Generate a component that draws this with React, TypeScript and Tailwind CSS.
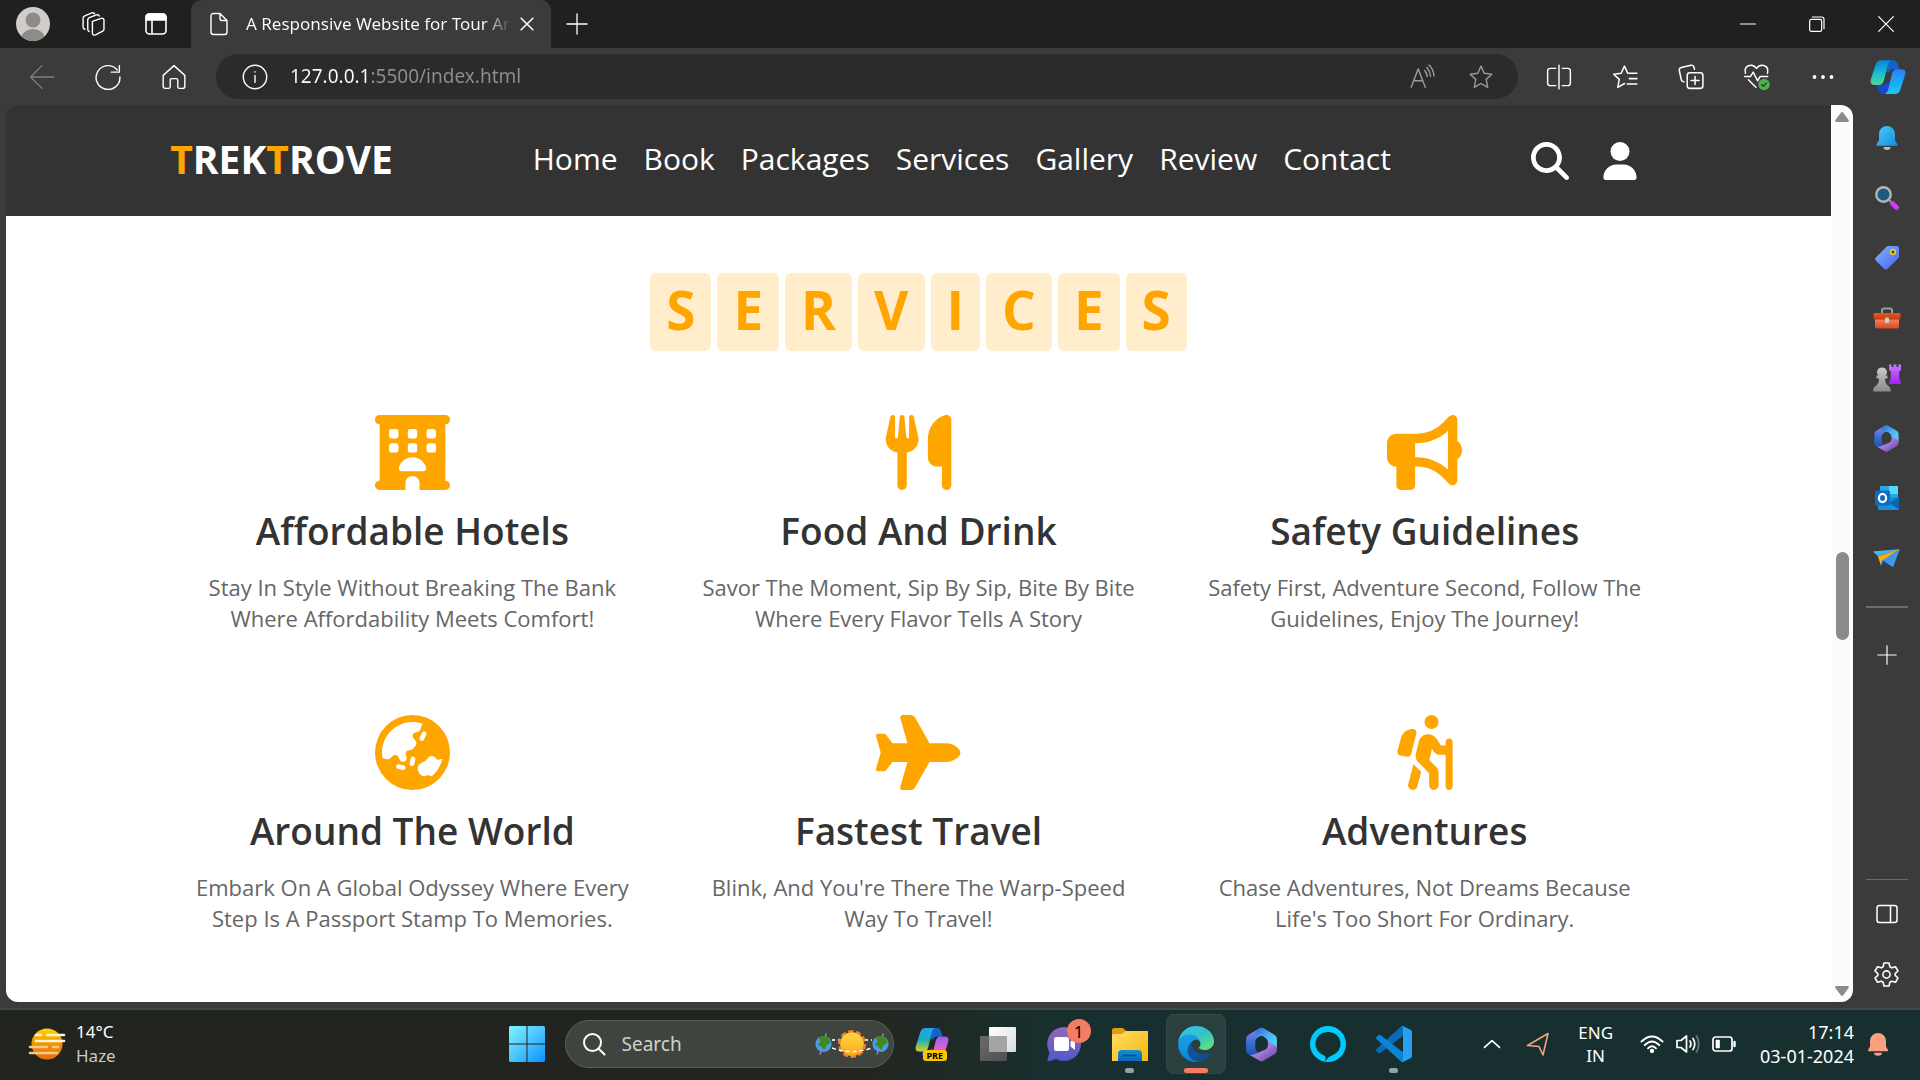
import type { ComponentType, ReactNode } from 'react';
import {
  FaBullhorn,
  FaEarthAsia,
  FaHotel,
  FaMagnifyingGlass,
  FaPersonHiking,
  FaUser,
  FaUtensils,
} from 'react-icons/fa6';

/* ---------- shared pieces ---------- */

function Gradient({ id, stops, vertical }: { id: string; stops: string[]; vertical?: boolean }) {
  return (
    <linearGradient id={id} x1="0" y1="0" x2={vertical ? '0' : '1'} y2="1">
      {stops.map((color, i) => (
        <stop key={color + i} offset={i / (stops.length - 1)} stopColor={color} />
      ))}
    </linearGradient>
  );
}

function GradientDefs() {
  return (
    <svg className="absolute size-0" aria-hidden="true">
      <defs>
        <Gradient id="bell" stops={['#4fc8f7', '#0f8fe0']} />
        <Gradient id="tag" stops={['#7ab8ff', '#4f5cf0']} />
        <Gradient id="rook" stops={['#c77dff', '#a41df5']} vertical />
        <Gradient id="pawn" stops={['#c9c9c9', '#8a8a8a']} vertical />
        <Gradient id="boxTop" stops={['#e8581c', '#c03a10']} vertical />
        <Gradient id="boxBody" stops={['#f58a60', '#dc4a20']} vertical />
        <Gradient id="mLeft" stops={['#a77be8', '#3d6fd6', '#1a52b8']} vertical />
        <Gradient id="mTop" stops={['#2f66d0', '#4fb0f5', '#4fe0f0']} />
        <Gradient id="mBottom" stops={['#c99af5', '#a878d8', '#5c3a94']} />
        <Gradient id="planeTop" stops={['#5cc8f5', '#2a90e8']} />
        <Gradient id="planeBody" stops={['#2f86e8', '#4aa8f5']} />
        <Gradient id="coA" stops={['#0a84d8', '#16b8d8', '#50d890']} vertical />
        <Gradient id="coB" stops={['#2f7cf0', '#18a8f8', '#22c8e8']} vertical />
        <Gradient id="cpA" stops={['#2aa0f0', '#16b0c0', '#d8d020']} vertical />
        <Gradient id="cpB" stops={['#9060f8', '#e060d0', '#ff7a60']} vertical />
        <Gradient id="sun" stops={['#ffd400', '#f29400', '#e86c10']} vertical />
        <Gradient id="sunCore" stops={['#ffd840', '#f8a818']} vertical />
        <Gradient id="start" stops={['#80f4ff', '#4cc4ff', '#0a90ff']} />
        <Gradient id="taskFront" stops={['#ffffff', '#dcdcdc']} />
        <Gradient id="taskBack" stops={['#6a6a6a', '#505050']} />
        <Gradient id="chat" stops={['#9468b8', '#5058c8']} vertical />
        <Gradient id="folder" stops={['#ffdc68', '#f8b808']} />
        <Gradient id="folderBase" stops={['#1290d8', '#0868b8']} vertical />
        <Gradient id="edgeDark" stops={['#0c59a4', '#114a8b']} />
        <Gradient id="edgeBlue" stops={['#1b9de2', '#1595df', '#0680d7']} vertical />
        <Gradient id="edgeGreen" stops={['#35c1f1', '#34c1c8', '#66eb6e']} />
      </defs>
    </svg>
  );
}

function Line({ size = 'size-6', width = 1.3, children }: { size?: string; width?: number; children: ReactNode }) {
  return (
    <svg
      viewBox="0 0 24 24"
      className={`${size} shrink-0`}
      fill="none"
      stroke="currentColor"
      strokeWidth={width}
      strokeLinecap="round"
      strokeLinejoin="round"
      aria-hidden="true"
    >
      {children}
    </svg>
  );
}

function IconButton({ label, className, children }: { label: string; className: string; children: ReactNode }) {
  return (
    <button type="button" aria-label={label} className={`flex shrink-0 items-center justify-center ${className}`}>
      {children}
    </button>
  );
}

/* ---------- coloured logos ---------- */

function Microsoft365({ size }: { size: string }) {
  return (
    <svg viewBox="0 0 24 24" className={size} aria-hidden="true">
      <path d="M11 1.300 3.600 5.600Q2 6.500 2 8.300V15.800Q2 17.500 3.500 18.300L6 19.300 9.500 17.200Q8 16.200 8 14V10Q8 8.200 9.500 7.200L13 5Z" fill="url(#mLeft)" />
      <path d="M9.500 2.200 11 1.300Q12 .7 13 1.300L20.400 5.600Q22 6.500 22 8.300V14.500L16.200 11Q16.200 8.600 14.500 7.600L13 6.700Q10.800 5.700 8 8.800V4.500Q8 2.900 9.500 2.200Z" fill="url(#mTop)" />
      <path d="M22 13.500V15.800Q22 17.500 20.400 18.400L13 22.700Q12 23.300 11 22.700L3.600 18.400Q5.800 19.300 7.600 18.200L14.500 15.300Q16.200 14.400 16.200 12.500V10Z" fill="url(#mBottom)" />
    </svg>
  );
}

function CopilotMark({ size, first, second }: { size: string; first: string; second: string }) {
  return (
    <svg viewBox="0 0 32 32" className={size} aria-hidden="true">
      <path d="M14 1H20.500Q23.500 1 24.500 4L26 9H20.500Q18 9 17 12L14.500 11Z" fill="#1464c8" />
      <path d="M18 31H11.500Q8.500 31 7.500 28L6 23H11.500Q14 23 15 20L17.500 21Z" fill="#1748d0" />
      <path d="M10 1H18.500Q16.600 2 15.800 5L12.600 18.500Q11.500 23 8.500 23H4Q-.5 23 .8 18L5 5Q6.200 1 10 1Z" fill={first} />
      <path d="M22 31H13.500Q15.400 30 16.200 27L19.400 13.500Q20.500 9 23.500 9H28Q32.500 9 31.200 14L27 27Q25.800 31 22 31Z" fill={second} />
    </svg>
  );
}

function EdgeLogo() {
  return (
    <svg viewBox="0 0 256 256" className="size-9" aria-hidden="true">
      <path fill="url(#edgeDark)" d="M231 190.500c-3.400 1.800-6.900 3.300-10.500 4.700a101.100 101.100 0 0 1-35.600 6.500c-46.900 0-87.700-32.300-87.700-73.600a31.400 31.400 0 0 1 16.400-27.400c-42.400 1.800-53.300 46-53.300 71.900 0 73.200 67.500 80.600 82 80.600 7.800 0 19.600-2.300 26.700-4.500l1.300-.4a128.400 128.400 0 0 0 66.600-52.900 4 4 0 0 0-5.600-5.500z" />
      <path fill="url(#edgeBlue)" d="M105.700 241.400a79.200 79.200 0 0 1-22.700-21.300 80.700 80.700 0 0 1 30.300-119.400c3.200-1.500 8.500-4.100 15.600-4a32.400 32.400 0 0 1 25.700 13 31.900 31.900 0 0 1 6.300 18.700c0-.2 24.500-79.600-80-79.600-43.900 0-80 41.700-80 78.300-.2 19.400 4 38.600 12.100 56.100a128 128 0 0 0 156.400 67 75.500 75.500 0 0 1-63.800-8.800z" />
      <path fill="url(#edgeGreen)" d="M152.300 148.900c-.8 1-3.300 2.500-3.300 5.700 0 2.600 1.700 5.100 4.700 7.300 14.400 10 41.500 8.700 41.500 8.700a59.600 59.600 0 0 0 30.300-8.400A61.400 61.400 0 0 0 256 109.300c.3-22.400-8-37.300-11.300-43.900C223.500 23.900 177.700 0 128 0A128 128 0 0 0 0 126.200c.5-36.500 36.800-66 80-66 3.500 0 23.500.3 42 10 16.300 8.600 24.900 18.900 30.800 29.200 6.200 10.700 7.300 24.100 7.300 29.500s-2.700 13.300-7.800 20z" />
    </svg>
  );
}

function CodeLogo() {
  return (
    <svg viewBox="0 0 100 100" className="size-9" aria-hidden="true">
      <path fill="#0a6cb8" d="M96.460 10.800 75.870.88a6.230 6.230 0 0 0-7.100 1.200L1.350 63.600a4.170 4.170 0 0 0 0 6.170l5.500 5a4.170 4.170 0 0 0 5.330.24L93.350 13.400A4.140 4.140 0 0 1 100 16.700v-.24a6.250 6.250 0 0 0-3.540-5.630z" />
      <path fill="#0a84d8" d="m96.460 89.200-20.590 9.910a6.220 6.220 0 0 1-7.100-1.210L1.350 36.400a4.170 4.170 0 0 1 0-6.170l5.500-5a4.170 4.170 0 0 1 5.330-.24l81.170 61.600a4.140 4.140 0 0 0 6.650-3.300v.24a6.250 6.250 0 0 1-3.540 5.640z" />
      <path fill="#27a0f2" d="M75.870 99.120a6.230 6.230 0 0 1-7.100-1.210A3.660 3.660 0 0 0 75 95.320V4.680a3.660 3.660 0 0 0-6.230-2.590 6.230 6.230 0 0 1 7.100-1.210l20.590 9.900A6.250 6.250 0 0 1 100 16.400v67.200a6.250 6.250 0 0 1-3.540 5.630z" />
    </svg>
  );
}

function Bell() {
  return (
    <svg viewBox="0 0 24 24" className="size-6" aria-hidden="true">
      <path d="M8.500 21h7a3.500 3 0 0 1-7 0Z" fill="#b9b9c4" />
      <path d="M12 0a8 8 0 0 0-8 8v6L1.600 18.600Q1.200 19.800 2.400 19.800H21.600Q22.800 19.800 22.400 18.600L20 14V8A8 8 0 0 0 12 0Z" fill="url(#bell)" />
    </svg>
  );
}

function Loupe() {
  return (
    <svg viewBox="0 0 24 24" className="size-6" aria-hidden="true">
      <circle cx="8.500" cy="8.500" r="7.200" fill="#1c5a80" stroke="#b4b4b4" strokeWidth="2.400" />
      <path d="m14 14 2.500 2.500" stroke="#9a9a9a" strokeWidth="2" />
      <path d="m17.500 17.500 4 4" stroke="#d03cfa" strokeWidth="4.600" strokeLinecap="round" />
    </svg>
  );
}

function Tag() {
  return (
    <svg viewBox="0 0 24 24" className="size-6" aria-hidden="true">
      <path d="M13.500 0H21.500Q24 0 24 2.500V10Q24 11.500 23 12.500L12.500 23Q11 24.500 9.300 23L1 14.700Q-.6 13 1 11.300L11.500 .8Q12.300 0 13.500 0Z" fill="url(#tag)" />
      <circle cx="18" cy="6" r="2.300" fill="#40404a" stroke="#f2d000" strokeWidth="1.700" />
    </svg>
  );
}

function Toolbox() {
  return (
    <svg viewBox="0 0 28 22" className="h-[22px] w-7" aria-hidden="true">
      <path d="M9 6V3.500Q9 1.500 11 1.500H17Q19 1.500 19 3.500V6" fill="none" stroke="#9c9c9c" strokeWidth="2" />
      <path d="M2 11H26V19.500Q26 21.500 24 21.500H4Q2 21.500 2 19.500Z" fill="url(#boxBody)" />
      <rect x=".5" y="6" width="27" height="6.500" rx="1" fill="url(#boxTop)" />
      <rect x="12" y="10.500" width="4" height="5.500" rx=".8" fill="#cfcfcf" />
    </svg>
  );
}

function Games() {
  return (
    <svg viewBox="0 0 28 28" className="size-7" aria-hidden="true">
      <path d="M16 .5h2.500V3h2V.5h3V3h2V.5H28V6l-2 2 .6 8 1.400 2.500V20H16v-1.500L17.400 16 18 8l-2-2Z" fill="url(#rook)" />
      <path d="M9 3.500a4.600 4.600 0 0 0-3.500 8H3.500v3H6Q6 20 2.500 22 0 23.500 .3 27.500H17.700Q18 23.500 15.500 22 12 20 12 14.500h2.500v-3H12.500A4.600 4.600 0 0 0 9 3.500Z" fill="url(#pawn)" />
    </svg>
  );
}

function Outlook() {
  return (
    <svg viewBox="0 0 24 24" className="size-6" aria-hidden="true">
      <rect x="5" y="0" width="18" height="16" rx="1" fill="#28a8ea" />
      <rect x="14" y="0" width="9" height="8" fill="#50d9ff" />
      <path d="M3 12 24 11V22.500Q24 24 22.500 24H4.500Q3 24 3 22.500Z" fill="#1490df" />
      <path d="m14 17 10-6v12.500Z" fill="#0a64b4" />
      <rect x="0" y="4.500" width="15" height="15" rx="1.500" fill="#0f6cc0" />
      <ellipse cx="7.500" cy="12" rx="3.600" ry="4.100" fill="none" stroke="#fff" strokeWidth="2.200" />
    </svg>
  );
}

function PaperPlane() {
  return (
    <svg viewBox="0 0 28 20" className="h-5 w-7" aria-hidden="true">
      <path d="M0 3.500 27 1 5 8.500Z" fill="url(#planeTop)" />
      <path d="M27 1 20 19 9 12.500Z" fill="url(#planeBody)" />
      <path d="M5 8.500 27 1 9.500 12.500 8 18Z" fill="#f5b010" />
      <path d="m9.500 12.500 3.500 1.800L8 18Z" fill="#1c4fa8" />
    </svg>
  );
}

function Earth() {
  return (
    <svg viewBox="0 0 24 34" className="h-6 w-[17px]" aria-hidden="true">
      <path d="M16 2 7 32" stroke="#9a86d0" strokeWidth="2" />
      <circle cx="12" cy="17" r="11.500" fill="#4c9ae0" />
      <path d="M5 8Q12 3 20 9L22 15 16 19 13 26 9 21 4 18 8 13Z" fill="#3f8a1c" />
    </svg>
  );
}

function SearchHighlight() {
  return (
    <div className="flex items-center" aria-hidden="true">
      <Earth />
      <svg viewBox="0 0 40 32" className="h-8 w-10">
        <path d="M0 12H7M33 12H40" stroke="#d8d8e8" strokeWidth="2" strokeDasharray="3 3" />
        <circle cx="20" cy="16" r="12" fill="#f08030" stroke="#f08030" strokeWidth="4" strokeDasharray="5 2.500" />
        <circle cx="20" cy="16" r="11.500" fill="url(#sunCore)" />
        <path d="M0 20Q20 27 40 20" stroke="#fff" strokeWidth="1.600" strokeDasharray="4 3" fill="none" />
      </svg>
      <Earth />
    </div>
  );
}

/* ---------- browser frame ---------- */

function TitleBar() {
  return (
    <div className="flex h-12 items-stretch bg-[#202020] pl-0.5 text-white">
      <IconButton label="Profile" className="w-[62px]">
        <svg viewBox="0 0 34 34" className="size-[34px]" aria-hidden="true">
          <clipPath id="avatarClip">
            <circle cx="17" cy="17" r="17" />
          </clipPath>
          <g clipPath="url(#avatarClip)">
            <rect width="34" height="34" fill="#d0cecb" />
            <circle cx="17" cy="13" r="7.500" fill="#8f8b87" />
            <ellipse cx="17" cy="32" rx="12" ry="10" fill="#8f8b87" />
          </g>
        </svg>
      </IconButton>
      <IconButton label="Workspaces" className="w-[58px]">
        <Line size="size-7" width={1.2}>
          <path d="M11.500 9.800 19 7.200Q20.800 6.600 21.400 8.400V16.500Q21.400 17.700 20.300 18.200L14.200 21.300Q11.900 22.200 11.500 20Z" />
          <path d="M8.800 18.500Q7.500 18 7.500 16.500V8.500Q7.500 7.200 8.800 6.600L15 4.200Q16.800 3.600 17.400 5.200" />
          <path d="M5 16.500Q3.500 16 3.500 14.500V7Q3.500 5.500 4.900 5L11 2.500Q12.800 2 13.400 3.300" />
        </Line>
      </IconButton>
      <IconButton label="Tab actions" className="w-[68px]">
        <svg viewBox="0 0 24 24" className="size-6" fill="none" stroke="currentColor" strokeWidth="1.600" aria-hidden="true">
          <rect x="2" y="2" width="20" height="20" rx="3.500" />
          <path d="M2 8V5.500Q2 2 5.500 2h13Q22 2 22 5.500V8Z" fill="currentColor" />
          <path d="M8 8v14" />
        </svg>
      </IconButton>
      <div className="ml-px flex w-[360px] items-center rounded-t-[10px] bg-[#3b3b3b] pr-3 pl-4">
        <Line size="size-6" width={1.400}>
          <path d="M6.500 1.500H13L20 8.500V20Q20 22.500 17.500 22.500H6.500Q4 22.500 4 20V4Q4 1.500 6.500 1.500ZM13 1.500V6.500Q13 8.500 15 8.500H20" />
        </Line>
        <span className="ml-[15px] min-w-0 flex-1 overflow-hidden bg-linear-to-r from-white from-90% to-transparent bg-clip-text text-[17px] whitespace-nowrap text-transparent">
          A Responsive Website for Tour And
        </span>
        <IconButton label="Close tab" className="ml-1 size-6">
          <Line size="size-5" width={1.800}>
            <path d="m5 5 14 14M19 5 5 19" />
          </Line>
        </IconButton>
      </div>
      <IconButton label="New tab" className="w-[52px]">
        <Line size="size-6" width={1.300}>
          <path d="M12 2v20M2 12h20" />
        </Line>
      </IconButton>
      <div className="flex-1" />
      <IconButton label="Minimise" className="w-[69px]">
        <Line size="size-4" width={1.800}>
          <path d="M1 12h22" />
        </Line>
      </IconButton>
      <IconButton label="Restore" className="w-[69px]">
        <Line size="size-4" width={1.800}>
          <rect x="1" y="5" width="18" height="18" rx="2.500" />
          <path d="M5 1.500H19Q22.500 1.500 22.500 5V19" />
        </Line>
      </IconButton>
      <IconButton label="Close window" className="w-[69px]">
        <Line size="size-4" width={1.800}>
          <path d="m1 1 22 22M23 1 1 23" />
        </Line>
      </IconButton>
    </div>
  );
}

const star = 'm12 2 3 6.500 7 .9-5.200 4.800L18.200 21.500 12 18 5.800 21.500l1.400-7.300L2 9.400l7-.9Z';

function AddressBar() {
  return (
    <div className="flex h-[57px] items-center bg-[#3b3b3b] pl-[9px] text-white">
      <IconButton label="Back" className="h-11 w-[66px] text-[#808080]">
        <Line size="size-[26px]" width={1.200}>
          <path d="M23 12H1.500M12 1.500 1.500 12 12 22.500" />
        </Line>
      </IconButton>
      <IconButton label="Refresh" className="h-11 w-[66px]">
        <Line size="size-[26px]">
          <path d="M20.500 5.500A11 11 0 1 0 23 12M22.500 1.500V7.500H15" />
        </Line>
      </IconButton>
      <IconButton label="Home" className="h-11 w-[66px]">
        <Line size="size-[26px]">
          <path d="M2 10.500 12 1.500l10 9V20.500Q22 22.500 20 22.500H17Q15.500 22.500 15.500 21V15Q15.500 13.500 14 13.500H10Q8.500 13.500 8.500 15V21Q8.500 22.500 7 22.500H4Q2 22.500 2 20.500Z" />
        </Line>
      </IconButton>
      <div className="ml-[9px] flex h-[45px] min-w-0 flex-1 items-center rounded-full bg-[#2b2b2b] pr-2 pl-[26px]">
        <IconButton label="Site information" className="size-[26px]">
          <Line size="size-[26px]">
            <circle cx="12" cy="12" r="10.800" />
            <path d="M12 10.500v6.500M12 7v.4" />
          </Line>
        </IconButton>
        <input
          aria-label="Address"
          defaultValue="127.0.0.1:5500/index.html"
          className="ml-[22px] min-w-0 flex-1 bg-linear-to-r from-white from-[81px] to-[#8e8e8e] to-[81px] bg-clip-text text-[19px] text-transparent outline-none"
        />
        <IconButton label="Read aloud" className="w-[59px] text-[#9a9a9a]">
          <Line size="size-[26px]" width={1.300}>
            <path d="m2 21.500 6.500-17 6.500 17M4.500 15.500h8M14.500 6q2 2.200 2.300 5.500M16.500 3.300q3 3.300 3.400 8M18.500 1q4.300 4.300 4.500 10" />
          </Line>
        </IconButton>
        <IconButton label="Add to favourites" className="w-[59px] text-[#9a9a9a]">
          <Line size="size-[26px]">
            <path d={star} />
          </Line>
        </IconButton>
      </div>
      <IconButton label="Split screen" className="ml-2 h-11 w-[66px]">
        <Line size="size-[26px]">
          <path d="M9 4H4Q1.500 4 1.500 6.500V17.500Q1.500 20 4 20H9M15 4h5Q22.500 4 22.500 6.500V17.500Q22.500 20 20 20H15M12 1v22" />
        </Line>
      </IconButton>
      <IconButton label="Favourites" className="h-11 w-[66px]">
        <Line size="size-[26px]" width={1.400}>
          <path d="M14.500 8.500 11.500 2 8.500 8.500 1.500 9.400l5.200 4.800L5.300 21.500 11.500 18M14.500 8.500H23M16 13.500H23M14 18.500H23" />
        </Line>
      </IconButton>
      <IconButton label="Collections" className="h-11 w-[66px]">
        <Line size="size-[26px]" width={1.400}>
          <rect x="8.500" y="8" width="14.500" height="14.500" rx="2.500" />
          <path d="M15.750 11.500v7.500M12 15.250h7.500M5.500 16.500 4.300 16Q3.300 15.500 3 14.300L1.200 6Q.8 3.800 3 3.300L12 1.200Q14.300 .8 14.800 3L15.200 4.800" />
        </Line>
      </IconButton>
      <IconButton label="Browser essentials" className="h-11 w-[66px]">
        <svg viewBox="0 0 26 26" className="size-7" fill="none" stroke="currentColor" strokeWidth="1.400" strokeLinecap="round" strokeLinejoin="round" aria-hidden="true">
          <path d="M2.300 9.500Q1 4 5 2.500 9.500 1 12.500 5 15.500 1 20 2.500 24 4 22.700 9.500M1.500 12.500H7L9.500 8.500l4 8 2.500-4h7M5 15.500 12 22.500" />
          <circle cx="19.500" cy="20" r="5.300" fill="#4caf50" stroke="none" />
          <path d="m17.300 20 1.600 1.600 2.800-3" stroke="#1f3a20" strokeWidth="1.100" />
        </svg>
      </IconButton>
      <IconButton label="Settings and more" className="h-11 w-[66px]">
        <svg viewBox="0 0 24 24" className="size-6" fill="currentColor" aria-hidden="true">
          <circle cx="3.500" cy="12" r="1.900" />
          <circle cx="12" cy="12" r="1.900" />
          <circle cx="20.500" cy="12" r="1.900" />
        </svg>
      </IconButton>
      <IconButton label="Copilot" className="h-11 w-16">
        <CopilotMark size="size-9" first="url(#coA)" second="url(#coB)" />
      </IconButton>
    </div>
  );
}

const sidebarApps: [string, ReactNode][] = [
  ['Notifications', <Bell />],
  ['Search', <Loupe />],
  ['Shopping', <Tag />],
  ['Tools', <Toolbox />],
  ['Games', <Games />],
  ['Microsoft 365', <Microsoft365 size="size-[29px]" />],
  ['Outlook', <Outlook />],
  ['Drop', <PaperPlane />],
];

function SideBar() {
  return (
    <aside className="flex w-[67px] flex-col items-center pt-[3px] pb-1 text-white">
      {sidebarApps.map(([label, icon]) => (
        <IconButton key={label} label={label} className="h-15 w-15">
          {icon}
        </IconButton>
      ))}
      <hr className="mt-[18px] h-0.5 w-[42px] border-0 bg-[#6c6c6c]" />
      <IconButton label="Customise" className="mt-[17px] h-15 w-15">
        <Line size="size-5" width={1.400}>
          <path d="M12 1v22M1 12h22" />
        </Line>
      </IconButton>
      <div className="flex-1" />
      <hr className="h-px w-[42px] border-0 bg-[#6c6c6c]" />
      <IconButton label="Hide sidebar" className="mt-1 h-15 w-15">
        <Line size="size-6" width={1.500}>
          <rect x="2" y="3.500" width="20" height="17" rx="2.500" />
          <path d="M15.500 3.500v17" />
        </Line>
      </IconButton>
      <IconButton label="Sidebar settings" className="h-15 w-15">
        <Line size="size-[27px]" width={1.400}>
          <circle cx="12" cy="12" r="3.200" />
          <path d="M9.800 1.800h4.400l.8 3.300 1.700 1 3.300-1 2.200 3.800-2.500 2.300v1.600l2.500 2.300-2.200 3.800-3.300-1-1.700 1-.8 3.300H9.800L9 18.900l-1.700-1-3.300 1-2.200-3.800 2.500-2.300v-1.600L1.800 8.900 4 5.100l3.300 1 1.700-1Z" />
        </Line>
      </IconButton>
    </aside>
  );
}

function ScrollArrow({ className }: { className: string }) {
  return (
    <svg viewBox="0 0 14 10" className={`h-2.5 w-3.5 fill-[#8b8b8b] ${className}`}>
      <path d="M5.800 .8Q7-.6 8.200 .8L13.600 8Q14.400 10 12.600 10H1.400Q-.4 10 .4 8Z" />
    </svg>
  );
}

function ScrollBar() {
  return (
    <div className="flex w-[22px] flex-col items-center bg-[#fcfcfc] pt-[7px] pb-1.5" aria-hidden="true">
      <ScrollArrow className="" />
      <div className="grow-430" />
      <div className="h-[88px] w-[13px] rounded-full bg-[#8b8b8b]" />
      <div className="grow-346" />
      <ScrollArrow className="rotate-180" />
    </div>
  );
}

/* ---------- web page ---------- */

const links = ['Home', 'Book', 'Packages', 'Services', 'Gallery', 'Review', 'Contact'];

type IconProps = { className?: string };

function Airplane({ className }: IconProps) {
  return (
    <svg viewBox="0 0 576 512" className={className} fill="currentColor" aria-hidden="true">
      <path d="M482.300 192c34.200 0 93.700 29 93.700 64 0 36-59.500 64-93.700 64H365.700L265.200 495.900c-5.700 10-16.300 16.100-27.800 16.100h-56.200c-10.600 0-18.300-10.200-15.400-20.400l49-171.600H112l-43.200 57.600c-3 4-7.800 6.400-12.800 6.400H14c-7.800 0-14-6.300-14-14 0-1.300.2-2.600.5-3.900L32 256 .5 145.900c-.4-1.300-.5-2.600-.5-3.900 0-7.800 6.300-14 14-14h42c5 0 9.800 2.400 12.800 6.400L112 192h102.900l-49-171.600C162.900 10.200 170.600 0 181.200 0h56.200c11.500 0 22.100 6.200 27.800 16.100L365.700 192z" />
    </svg>
  );
}

const services: { icon: ComponentType<IconProps>; title: string; text: string }[] = [
  { icon: FaHotel, title: 'Affordable Hotels', text: 'Stay In Style Without Breaking The Bank Where Affordability Meets Comfort!' },
  { icon: FaUtensils, title: 'Food And Drink', text: 'Savor The Moment, Sip By Sip, Bite By Bite Where Every Flavor Tells A Story' },
  { icon: FaBullhorn, title: 'Safety Guidelines', text: 'Safety First, Adventure Second, Follow The Guidelines, Enjoy The Journey!' },
  { icon: FaEarthAsia, title: 'Around The World', text: 'Embark On A Global Odyssey Where Every Step Is A Passport Stamp To Memories.' },
  { icon: Airplane, title: 'Fastest Travel', text: "Blink, And You're There The Warp-Speed Way To Travel!" },
  { icon: FaPersonHiking, title: 'Adventures', text: "Chase Adventures, Not Dreams Because Life's Too Short For Ordinary." },
];

function WebPage() {
  return (
    <div className="flex min-w-0 flex-1 flex-col font-['Open_Sans',sans-serif]">
      <header className="flex items-center justify-between bg-[#333] px-[9%] py-9 text-white">
        <a href="#home" className="pb-[3px] text-[39px] leading-9 font-bold">
          <span className="text-[#ffa500]">T</span>REK<span className="text-[#ffa500]">T</span>ROVE
        </a>
        <nav className="flex gap-[26px] pb-[3px] text-[30px] leading-9">
          {links.map((link) => (
            <a key={link} href={`#${link.toLowerCase()}`}>
              {link}
            </a>
          ))}
        </nav>
        <div className="flex items-center gap-8 pr-7">
          <button type="button" aria-label="Search the site">
            <FaMagnifyingGlass className="size-[38px]" />
          </button>
          <button type="button" aria-label="Log in">
            <FaUser className="h-[38px] w-auto" />
          </button>
        </div>
      </header>
      <main className="flex-1 bg-white px-[9%] pt-[57px]">
        <h1 className="flex justify-center gap-1.5 text-[53px] leading-[62px] font-bold text-[#ffa500]" aria-label="Services">
          {'SERVICES'.split('').map((letter, i) => (
            <span key={i} className="rounded-md bg-[#ffedcc] px-4 pt-1.5 pb-2.5">
              {letter}
            </span>
          ))}
        </h1>
        <div className="mt-16 grid grid-cols-3 gap-x-[22px] gap-y-[81px]">
          {services.map(({ icon: Icon, title, text }) => (
            <section key={title} className="flex flex-col items-center px-[18px] text-center">
              <Icon className="h-[75px] w-auto text-[#ffa500]" />
              <h2 className="mt-[18px] text-[37px] leading-[46px] font-semibold text-[#333]">{title}</h2>
              <p className="mt-[18px] text-[22px] leading-[31px] text-[#666]">{text}</p>
            </section>
          ))}
        </div>
      </main>
    </div>
  );
}

/* ---------- taskbar ---------- */

function TaskButton({ label, running, active, children }: { label: string; running?: boolean; active?: boolean; children: ReactNode }) {
  return (
    <button type="button" aria-label={label} className="relative flex h-[66px] w-[66px] items-center justify-center">
      {active && <span className="absolute inset-[3px] rounded-lg border border-white/5 bg-white/8" />}
      <span className="relative">{children}</span>
      {running && <span className="absolute bottom-1 h-[5px] w-[9px] rounded-full bg-[#9aa3a3]" />}
      {active && <span className="absolute bottom-1 h-[5px] w-6 rounded-full bg-[#f47c64]" />}
    </button>
  );
}

function TaskBar() {
  return (
    <footer className="grid h-[72px] grid-cols-[1fr_auto_1fr] items-center border-t-2 border-[#3f4846] bg-linear-to-r from-[#22251f] from-45% to-[#17302f] to-55% pb-0.5 text-white">
      <button type="button" className="flex items-center gap-2.5 pl-[28px] text-left text-[17px] leading-6">
        <svg viewBox="0 0 38 38" className="size-[38px]" aria-hidden="true">
          <circle cx="19" cy="19" r="15.500" fill="url(#sun)" />
          <path d="M8 10h5M19 10h17M8 16h28" stroke="#fff4d8" strokeWidth="2.600" strokeLinecap="round" />
          <path d="M2 22h17M25 22h5M2 28h27" stroke="#f0c890" strokeWidth="2.600" strokeLinecap="round" />
        </svg>
        <span>
          14°C
          <br />
          <span className="text-[#c8cac6]">Haze</span>
        </span>
      </button>
      <div className="flex items-center">
        <TaskButton label="Start">
          <svg viewBox="0 0 35 35" className="size-9" aria-hidden="true">
            <path d="M1 0H17V17H0V1ZM18 0H34L35 1V17H18ZM0 18H17V35H1L0 34ZM18 18H35V34L34 35H18Z" fill="url(#start)" />
          </svg>
        </TaskButton>
        <label className="mx-[5px] flex h-12 w-[329px] items-center rounded-full border border-[#5c5f5b] bg-[#40443f] pr-1 pl-4">
          <Line size="size-6" width={2}>
            <circle cx="10.500" cy="10.500" r="8.500" />
            <path d="m16.500 16.500 6 6" />
          </Line>
          <input
            type="search"
            placeholder="Search"
            aria-label="Search Windows"
            className="ml-4 min-w-0 flex-1 bg-transparent text-[19px] outline-none placeholder:text-[#d0d2cf]"
          />
          <SearchHighlight />
        </label>
        <TaskButton label="Copilot preview">
          <CopilotMark size="size-[34px]" first="url(#cpA)" second="url(#cpB)" />
          <span className="absolute top-[23px] left-2 rounded-[3px] bg-[#ffc400] px-1 text-[9px] leading-[11px] font-bold text-black">PRE</span>
        </TaskButton>
        <TaskButton label="Task view">
          <svg viewBox="0 0 36 34" className="h-[34px] w-9" aria-hidden="true">
            <rect x="9" y="0" width="27" height="25" rx="1" fill="url(#taskFront)" />
            <rect x="0" y="9" width="27" height="25" rx="1" fill="url(#taskBack)" />
            <path d="M9 9H27V25H9Z" fill="#a4a4a4" />
          </svg>
        </TaskButton>
        <TaskButton label="Chat">
          <svg viewBox="0 0 34 34" className="size-[34px]" aria-hidden="true">
            <path d="M17 0A17 17 0 1 1 9 32Q4.500 34 1 34 0 34 .5 32.500L2.500 25.500A17 17 0 0 1 17 0Z" fill="url(#chat)" />
            <rect x="7" y="10" width="15" height="14" rx="2.500" fill="#fff" />
            <path d="M23.500 14.500 28 11V23L23.500 19.500Z" fill="#fff" />
          </svg>
          <span className="absolute -top-2 left-5 flex size-6 items-center justify-center rounded-full bg-[#f47c64] text-[17px] leading-none text-black">1</span>
        </TaskButton>
        <TaskButton label="File Explorer" running>
          <svg viewBox="0 0 36 34" className="h-[34px] w-9" aria-hidden="true">
            <path d="M0 3Q0 1 2 1H11L15 5V10H0Z" fill="#dea010" />
            <path d="M0 9Q0 7 2 7H10L14 4H36V34H0Z" fill="url(#folder)" />
            <path d="M6 34V27Q6 23 10 23H26Q30 23 30 27V34Z" fill="url(#folderBase)" />
            <path d="M11 28.500H25" stroke="#0a4a80" strokeWidth="1.600" />
          </svg>
        </TaskButton>
        <TaskButton label="Microsoft Edge" active>
          <EdgeLogo />
        </TaskButton>
        <TaskButton label="Microsoft 365">
          <Microsoft365 size="size-[37px]" />
        </TaskButton>
        <TaskButton label="Alexa">
          <svg viewBox="0 0 36 36" className="size-9" aria-hidden="true">
            <path d="M18 0A18 18 0 1 0 18 36 18 18 0 1 0 18 0ZM18 6A12 12 0 0 1 22 29.500Q17.500 31 15.500 35.500V31Q15.500 30 14 29.500A12 12 0 0 1 18 6Z" fill="#00caff" fillRule="evenodd" />
          </svg>
        </TaskButton>
        <TaskButton label="Visual Studio Code" running>
          <CodeLogo />
        </TaskButton>
      </div>
      <div className="flex items-center justify-end pr-[30px] text-[17px] leading-6">
        <IconButton label="Hidden icons" className="size-6">
          <Line size="size-5" width={2}>
            <path d="m3 16 9-8 9 8" />
          </Line>
        </IconButton>
        <IconButton label="Location" className="ml-[22px] size-6 text-[#f4a083]">
          <Line size="size-6" width={1.600}>
            <path d="M22 1.500 1.500 13.500 13 14.500 17 23Z" />
          </Line>
        </IconButton>
        <button type="button" className="ml-7 text-center leading-[23px]">
          ENG
          <br />
          IN
        </button>
        <button type="button" aria-label="Network, volume and battery" className="ml-[27px] flex items-center gap-3">
          <Line size="size-6" width={1.900}>
            <path d="M1.500 9.500Q12-.5 22.500 9.500M4.800 13Q12 6 19.200 13M8 16.300Q12 12.300 16 16.300" />
            <circle cx="12" cy="19" r="1.200" fill="currentColor" />
          </Line>
          <Line size="size-6" width={1.700}>
            <path d="M1 8.500H5L10.500 4V20L5 15.500H1ZM14 9Q16 12 14 15M17 6.500Q20.500 12 17 17.500" />
            <path d="M20.500 4Q25 12 20.500 20" stroke="#66787a" />
          </Line>
          <Line size="size-6" width={1.700}>
            <rect x="1" y="5" width="19" height="14" rx="2.500" />
            <path d="M22.500 10v4" strokeWidth="2.400" />
            <path d="M4.500 8.500h2.500v7H4.500Z" fill="currentColor" />
          </Line>
        </button>
        <button type="button" className="ml-6 text-right text-[18px]">
          17:14
          <br />
          03-01-2024
        </button>
        <IconButton label="Notification centre" className="ml-3 size-6">
          <svg viewBox="0 0 24 24" className="size-6 fill-[#fb9f80]" aria-hidden="true">
            <path d="M12 1A8 8 0 0 0 4 9v5.500L2 18Q1.700 19.300 3 19.300H21Q22.300 19.300 22 18L20 14.500V9A8 8 0 0 0 12 1ZM8 20.800h8a4 3 0 0 1-8 0Z" />
          </svg>
        </IconButton>
      </div>
    </footer>
  );
}

export default function App() {
  return (
    <div className="flex min-h-screen flex-col bg-[#3b3b3b] font-['Noto_Sans',sans-serif]">
      <GradientDefs />
      <TitleBar />
      <AddressBar />
      <div className="flex flex-1 pl-1.5">
        <div className="mb-1.5 flex min-w-0 flex-1 overflow-hidden rounded-xl">
          <WebPage />
          <ScrollBar />
        </div>
        <SideBar />
      </div>
      <TaskBar />
    </div>
  );
}
